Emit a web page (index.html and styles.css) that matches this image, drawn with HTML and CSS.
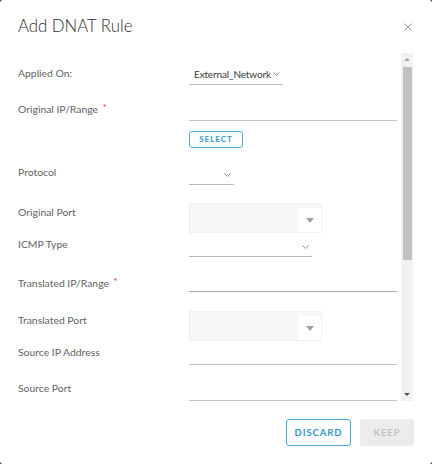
FILE: index.html
```html
<!DOCTYPE html>
<html lang="en">
<head>
<meta charset="utf-8">
<title>Add DNAT Rule</title>
<link rel="stylesheet" href="styles.css">
</head>
<body>
<div class="dialog">
  <header class="head">
    <h1 class="title">Add DNAT Rule</h1>
    <button class="close" aria-label="Close">
      <svg width="8" height="8" viewBox="0 0 8 8"><path d="M0.5 0.5 L7.5 7.5 M7.5 0.5 L0.5 7.5" stroke="#9a9a9a" stroke-width="1" fill="none"/></svg>
    </button>
  </header>
  <div class="body">
    <form class="form">
      <div class="row r-applied">
        <label class="lbl">Applied On:</label>
        <div class="ctl">
          <div class="select w-applied"><span class="val">External_Network</span><svg class="chev" width="7" height="4" viewBox="0 0 7 4"><path d="M0.5 0.5 L3.5 3.5 L6.5 0.5" stroke="#8c8c8c" fill="none"/></svg></div>
        </div>
      </div>
      <div class="row r-origip">
        <label class="lbl">Original IP/Range <span class="req">*</span></label>
        <div class="ctl">
          <div class="input h22"></div>
          <button type="button" class="btn-select">SELECT</button>
        </div>
      </div>
      <div class="row r-proto">
        <label class="lbl">Protocol</label>
        <div class="ctl">
          <div class="select w-proto h22"><span class="val"></span><svg class="chev" width="7" height="4" viewBox="0 0 7 4"><path d="M0.5 0.5 L3.5 3.5 L6.5 0.5" stroke="#8c8c8c" fill="none"/></svg></div>
        </div>
      </div>
      <div class="row r-oport">
        <label class="lbl">Original Port</label>
        <div class="ctl">
          <div class="combo"><span class="combo-btn"><svg width="8" height="5" viewBox="0 0 8 5"><path d="M0 0 H8 L4 5 Z" fill="#a0a0a0"/></svg></span></div>
        </div>
      </div>
      <div class="row r-icmp">
        <label class="lbl">ICMP Type</label>
        <div class="ctl">
          <div class="select w-icmp h22"><span class="val"></span><svg class="chev" width="7" height="4" viewBox="0 0 7 4"><path d="M0.5 0.5 L3.5 3.5 L6.5 0.5" stroke="#8c8c8c" fill="none"/></svg></div>
        </div>
      </div>
      <div class="row r-tip">
        <label class="lbl">Translated IP/Range <span class="req">*</span></label>
        <div class="ctl">
          <div class="input h19 dark"></div>
        </div>
      </div>
      <div class="row r-tport">
        <label class="lbl">Translated Port</label>
        <div class="ctl">
          <div class="combo"><span class="combo-btn"><svg width="8" height="5" viewBox="0 0 8 5"><path d="M0 0 H8 L4 5 Z" fill="#a0a0a0"/></svg></span></div>
        </div>
      </div>
      <div class="row r-sip">
        <label class="lbl">Source IP Address</label>
        <div class="ctl">
          <div class="input h22"></div>
        </div>
      </div>
      <div class="row r-sport">
        <label class="lbl">Source Port</label>
        <div class="ctl">
          <div class="input h22"></div>
        </div>
      </div>
    </form>
    <div class="scrollbar">
      <div class="sb-btn"><svg width="6" height="3" viewBox="0 0 6 3"><path d="M0 3 L3 0 L6 3 Z" fill="#a3a3a3"/></svg></div>
      <div class="sb-track"><div class="sb-thumb"></div></div>
      <div class="sb-btn"><svg width="6" height="3" viewBox="0 0 6 3"><path d="M0 0 L6 0 L3 3 Z" fill="#505050"/></svg></div>
    </div>
  </div>
  <footer class="foot">
    <button type="button" class="btn btn-outline">DISCARD</button>
    <button type="button" class="btn btn-disabled" disabled>KEEP</button>
  </footer>
</div>
</body>
</html>
```
FILE: styles.css
```css
* { box-sizing: border-box; }
html, body { margin: 0; padding: 0; }
body {
  background: #2b2b2b;
  font-family: Lato, "Open Sans", "Liberation Sans", sans-serif;
  color: #565656;
}
.dialog {
  width: 432px;
  height: 464px;
  background: #fff;
  border-radius: 3px;
  display: flex;
  flex-direction: column;
}
.head {
  height: 53px;
  padding: 14px 19px 0 18px;
  display: flex;
  justify-content: space-between;
  align-items: flex-start;
}
.title {
  margin: 0;
  font-size: 16.8px;
  line-height: 24px;
  font-weight: 300;
  color: #2f2f2f;
  letter-spacing: 0;
}
.close {
  border: 0;
  background: none;
  padding: 0;
  margin-top: 9px;
  margin-right: 1px;
  width: 8px;
  height: 8px;
  display: flex;
}
.body {
  height: 348px;
  display: flex;
  padding: 0 19px 0 18px;
}
.form {
  flex: 1;
  padding-top: 11px;
  overflow: hidden;
  margin: 0;
}
.row {
  display: flex;
  align-items: flex-start;
}
.lbl {
  width: 171px;
  flex: none;
  font-size: 10.4px;
  line-height: 18px;
  color: #626262;
}
.req { color: #d0341a; font-size: 9px; vertical-align: 2px; margin-left: 2px; }
.ctl {
  flex: 1;
  display: flex;
  flex-direction: column;
  align-items: flex-start;
}
.r-origip { margin-top: 14px; }
.r-proto { margin-top: 15px; }
.r-oport { margin-top: 18px; }
.r-icmp { margin-top: 2px; }
.r-tip { margin-top: 16px; }
.r-tport { margin-top: 19px; }
.r-sip { margin-top: 2px; }
.r-sport { margin-top: 14px; }

.input {
  width: 100%;
  border-bottom: 1px solid #c4c4c4;
}
.input.dark { border-bottom-color: #a8a8a8; }
.h22 { height: 22px; }
.h19 { height: 19px; }
.select {
  height: 21px;
  border-bottom: 1px solid #b9b9b9;
  display: flex;
  align-items: center;
  padding: 0 3px 0 5px;
  justify-content: space-between;
}
.select.h22 { height: 22px; }
.select .val {
  font-size: 10px;
  letter-spacing: -0.15px;
  color: #3a3a3a;
  line-height: 18px;
}
.w-applied { width: 94px; }
.w-proto { width: 45px; padding-top: 2px; }
.w-icmp { width: 123px; padding-top: 2px; }
.chev { flex: none; }
.btn-select {
  margin-top: 10px;
  width: 54px;
  height: 17px;
  border: 1px solid #4aa8d8;
  border-radius: 3px;
  background: #fff;
  color: #3397cc;
  font-family: inherit;
  font-size: 8px;
  font-weight: 700;
  letter-spacing: 1px;
  padding: 0;
  line-height: 15px;
}
.combo {
  width: 133px;
  height: 30px;
  background: #f7f7f7;
  border: 1px solid #efefef;
  display: flex;
  justify-content: flex-end;
  align-items: flex-end;
}
.combo-btn {
  width: 23px;
  height: 24px;
  background: #fff;
  display: flex;
  align-items: center;
  justify-content: center;
  padding-top: 1px;
}

.scrollbar {
  width: 12px;
  margin-left: 4px;
  background: #f1f1f1;
  display: flex;
  flex-direction: column;
}
.sb-btn {
  height: 13px;
  display: flex;
  align-items: center;
  justify-content: center;
  flex: none;
}
.sb-track {
  flex: 1;
  padding: 1px 1px 0 2px;
}
.sb-thumb {
  height: 193px;
  background: #c1c1c1;
}

.foot {
  flex: 1;
  display: flex;
  justify-content: flex-end;
  align-items: flex-start;
  gap: 9px;
  padding: 18px 18px 0;
}
.btn {
  height: 27px;
  border-radius: 3px;
  font-family: inherit;
  font-size: 9.5px;
  font-weight: 700;
  letter-spacing: 0.9px;
  padding: 0;
}
.btn-outline {
  width: 65px;
  border: 1px solid #4aa8d8;
  background: #fff;
  color: #3397cc;
}
.btn-disabled {
  width: 54px;
  border: 0;
  background: #ececec;
  color: #c2c2c2;
}
```
